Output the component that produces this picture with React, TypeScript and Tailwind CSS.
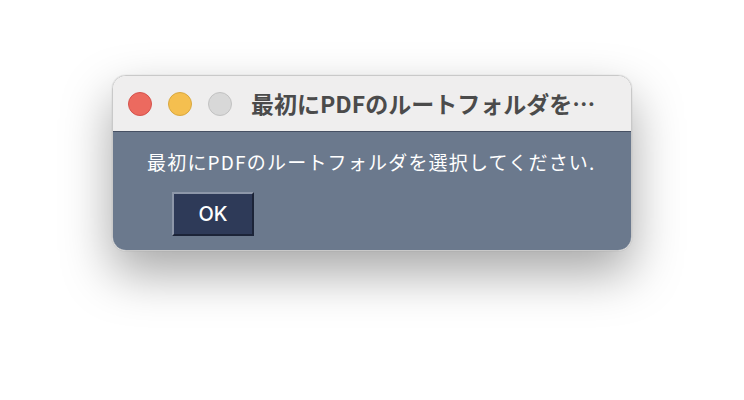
import React from 'react';

const jp = { fontFamily: '"Noto Sans CJK JP", "Noto Sans", sans-serif' };

const TrafficLight: React.FC<{ className: string }> = ({ className }) => (
  <span className={`block h-[24px] w-[24px] rounded-full border ${className}`} />
);

export default function App() {
  return (
    <div className="h-[400px] w-[744px] bg-white" style={jp}>
      <div className="pl-[112px] pt-[75px]">
        <div className="w-[520px] overflow-hidden rounded-[14px] border border-[#c9c9c9] shadow-[0_22px_50px_rgba(0,0,0,0.35),0_0_1px_rgba(0,0,0,0.3)]">
          <div className="flex h-[56px] items-center border-b border-[#465063] bg-[#efeeee] pl-[15px]">
            <div className="flex gap-[16px]">
              <TrafficLight className="border-[#d5524c] bg-[#ec6a5f]" />
              <TrafficLight className="border-[#d9a83f] bg-[#f5bf4f]" />
              <TrafficLight className="border-[#c2c2c2] bg-[#d8d8d8]" />
            </div>
            <div className="ml-[19px] text-[23px] font-bold leading-none text-[#4b4b4b]">
              最初にPDFのルートフォルダを…
            </div>
          </div>
          <div className="h-[118px] bg-[#6b798d] pl-[34px] pt-[18px]">
            <p className="text-[19px] leading-[24px] tracking-[1.2px] text-white">最初にPDFのルートフォルダを選択してください.</p>
            <button
              type="button"
              className="ml-[25px] mt-[18px] flex h-[44px] w-[82px] items-center justify-center border-2 border-t-[#8d97a9] border-l-[#8d97a9] border-b-[#1c2438] border-r-[#1c2438] bg-[#2e3a58] text-[20px] font-medium text-white"
              style={{ fontFamily: 'Inter, "Liberation Sans", Arial, sans-serif' }}
            >
              OK
            </button>
          </div>
        </div>
      </div>
    </div>
  );
}
